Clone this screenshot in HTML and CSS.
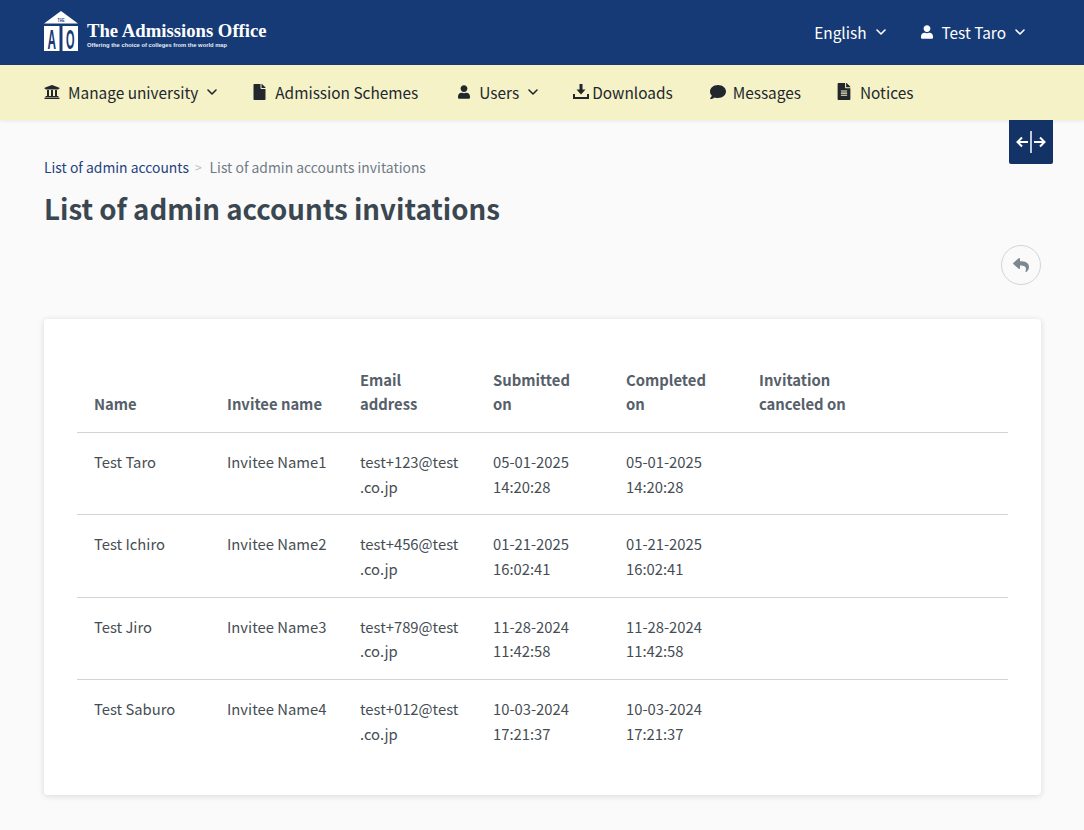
FILE: index.html
```html
<!DOCTYPE html>
<html lang="en">
<head>
<meta charset="utf-8">
<title>List of admin accounts invitations</title>
<link rel="stylesheet" href="styles.css">
</head>
<body>
<svg class="defs" width="0" height="0" aria-hidden="true">
  <symbol id="chev" viewBox="0 0 10 6"><path d="M1 1l4 4 4-4" fill="none" stroke="currentColor" stroke-width="1.6" stroke-linecap="round" stroke-linejoin="round"/></symbol>
  <symbol id="user" viewBox="0 0 448 512"><path d="M224 256c70.700 0 128-57.300 128-128S294.700 0 224 0 96 57.300 96 128s57.300 128 128 128zm89.600 32h-16.700c-22.200 10.200-46.900 16-72.900 16s-50.600-5.800-72.900-16h-16.700C60.200 288 0 348.200 0 422.400V464c0 26.500 21.500 48 48 48h352c26.500 0 48-21.500 48-48v-41.600c0-74.200-60.200-134.400-134.400-134.400z" fill="currentColor"/></symbol>
</svg>
<header class="topbar">
  <a class="brand">
    <svg class="brand-mark" viewBox="0 0 34 40" width="34" height="40">
      <path d="M17 0 34 12.500H0z" fill="#fff"/>
      <rect x="0" y="15" width="15.500" height="25" fill="#fff"/>
      <rect x="18.500" y="15" width="15.500" height="25" fill="#fff"/>
      <text x="13.500" y="10.500" class="mark-the" textLength="7" lengthAdjust="spacingAndGlyphs">THE</text>
      <text x="3.500" y="38" class="mark-big" textLength="8.500" lengthAdjust="spacingAndGlyphs">A</text>
      <text x="22" y="38" class="mark-big" textLength="8.500" lengthAdjust="spacingAndGlyphs">O</text>
    </svg>
    <span class="brand-text">
      <span class="brand-name">The Admissions Office</span>
      <span class="brand-tag">Offering the choice of colleges from the world map</span>
    </span>
  </a>
  <div class="top-actions">
    <span class="top-item">English <svg class="chev"><use href="#chev"/></svg></span>
    <span class="top-item"><svg class="ico-user"><use href="#user"/></svg>Test Taro <svg class="chev"><use href="#chev"/></svg></span>
  </div>
</header>
<nav class="menu">
  <span class="menu-item">
    <svg class="ico-bank" viewBox="0 0 512 512"><path d="M496 128v16a8 8 0 0 1-8 8h-24v12c0 6.627-5.373 12-12 12H60c-6.627 0-12-5.373-12-12v-12H24a8 8 0 0 1-8-8v-16a8 8 0 0 1 4.941-7.391l232-88a7.996 7.996 0 0 1 6.118 0l232 88A8 8 0 0 1 496 128zm-24 304H40c-13.255 0-24 10.745-24 24v16a8 8 0 0 0 8 8h464a8 8 0 0 0 8-8v-16c0-13.255-10.745-24-24-24zM96 192v192H60c-6.627 0-12 5.373-12 12v20h416v-20c0-6.627-5.373-12-12-12h-36V192h-64v192h-64V192h-64v192h-64V192H96z" fill="currentColor"/></svg>
    Manage university <svg class="chev"><use href="#chev"/></svg>
  </span>
  <span class="menu-item">
    <svg class="ico-file" viewBox="0 0 384 512"><path d="M224 136V0H24C10.700 0 0 10.700 0 24v464c0 13.300 10.700 24 24 24h336c13.300 0 24-10.700 24-24V160H248c-13.200 0-24-10.800-24-24zm160-14.100v6.100H256V0h6.100c6.400 0 12.500 2.500 17 7l97.900 98c4.500 4.500 7 10.600 7 16.900z" fill="currentColor"/></svg>Admission Schemes
  </span>
  <span class="menu-item users"><svg class="ico-user"><use href="#user"/></svg>Users <svg class="chev"><use href="#chev"/></svg></span>
  <span class="menu-item tight">
    <svg class="ico-dl" viewBox="0 0 16 15"><path d="M6.500 0h3v5.500h3L8 10.500 3.500 5.500h3z" fill="currentColor"/><path d="M1 10v4h14v-4" fill="none" stroke="currentColor" stroke-width="2"/></svg>Downloads
  </span>
  <span class="menu-item msg">
    <svg class="ico-msg" viewBox="0 32 512 448"><path d="M256 32C114.600 32 0 125.100 0 240c0 49.600 21.400 95 57 130.700C44.500 421.100 2.700 466 2.200 466.500c-2.200 2.300-2.800 5.700-1.500 8.700S4.800 480 8 480c66.300 0 116-31.800 140.600-51.400 32.700 12.300 69 19.400 107.400 19.400 141.400 0 256-93.100 256-208S397.400 32 256 32z" fill="currentColor"/></svg>Messages
  </span>
  <span class="menu-item">
    <svg class="ico-note" viewBox="0 0 384 512"><path d="M224 136V0H24C10.700 0 0 10.700 0 24v464c0 13.300 10.700 24 24 24h336c13.300 0 24-10.700 24-24V160H248c-13.200 0-24-10.800-24-24zm64 236c0 6.600-5.400 12-12 12H108c-6.600 0-12-5.400-12-12v-8c0-6.600 5.400-12 12-12h168c6.600 0 12 5.400 12 12v8zm0-64c0 6.600-5.400 12-12 12H108c-6.600 0-12-5.400-12-12v-8c0-6.600 5.400-12 12-12h168c6.600 0 12 5.400 12 12v8zm0-72v8c0 6.600-5.400 12-12 12H108c-6.600 0-12-5.400-12-12v-8c0-6.600 5.400-12 12-12h168c6.600 0 12 5.400 12 12zm96-114.100v6.100H256V0h6.100c6.400 0 12.500 2.500 17 7l97.900 98c4.500 4.500 7 10.600 7 16.900z" fill="currentColor"/></svg>Notices
  </span>
</nav>
<main class="content">
  <button class="toggle" aria-label="Toggle width">
    <svg viewBox="0 0 30 22" width="30" height="22"><path d="M15 0v22" stroke="#fff" stroke-width="1.500" fill="none"/><path d="M12 11H1.500M6 6.500 1.500 11 6 15.500M18 11h10.500M24 6.500 28.500 11 24 15.500" stroke="#fff" stroke-width="2" fill="none"/></svg>
  </button>
  <div class="crumbs"><a class="crumb-link">List of admin accounts</a><span class="crumb-sep">&gt;</span><span class="crumb-cur">List of admin accounts invitations</span></div>
  <h1 class="title">List of admin accounts invitations</h1>
  <div class="actions">
    <button class="back" aria-label="Back">
      <svg viewBox="0 0 512 512" width="16" height="16"><path d="M8.309 189.836L184.313 37.851C199.719 24.546 224 35.347 224 56.015v80.053c160.629 1.839 288 34.032 288 186.258 0 61.441-39.581 122.309-83.333 154.132-13.653 9.931-33.111-2.533-28.077-18.631 45.344-145.012-21.507-183.51-176.59-185.742V360c0 20.7-24.3 31.453-39.687 18.164l-176.004-152c-11.071-9.562-11.086-26.753 0-36.328z" fill="#7c8890"/></svg>
    </button>
  </div>
  <section class="card">
    <table class="grid">
      <thead>
        <tr><th>Name</th><th>Invitee name</th><th>Email address</th><th>Submitted on</th><th>Completed on</th><th>Invitation canceled on</th><th></th></tr>
      </thead>
      <tbody>
        <tr><td>Test Taro</td><td>Invitee Name1</td><td>test+123@test .co.jp</td><td>05-01-2025 14:20:28</td><td>05-01-2025 14:20:28</td><td></td><td></td></tr>
        <tr><td>Test Ichiro</td><td>Invitee Name2</td><td>test+456@test .co.jp</td><td>01-21-2025 16:02:41</td><td>01-21-2025 16:02:41</td><td></td><td></td></tr>
        <tr><td>Test Jiro</td><td>Invitee Name3</td><td>test+789@test .co.jp</td><td>11-28-2024 11:42:58</td><td>11-28-2024 11:42:58</td><td></td><td></td></tr>
        <tr><td>Test Saburo</td><td>Invitee Name4</td><td>test+012@test .co.jp</td><td>10-03-2024 17:21:37</td><td>10-03-2024 17:21:37</td><td></td><td></td></tr>
      </tbody>
    </table>
  </section>
</main>
</body>
</html>
```
FILE: styles.css
```css
* { box-sizing: border-box; }
html, body { margin: 0; padding: 0; }
body {
  width: 1084px;
  height: 830px;
  overflow: hidden;
  background: #fafafa;
  font-family: "Noto Sans CJK JP", "Noto Sans", sans-serif;
  font-size: 15.4px;
  line-height: 24px;
  color: #363f46;
}
.defs { position: absolute; }
.topbar {
  height: 65px;
  background: #163a75;
  color: #fff;
  display: flex;
  align-items: center;
  justify-content: space-between;
  padding: 0 59px 2px 44px;
}
.brand { display: flex; align-items: flex-start; gap: 9px; margin-top: -1px; }
.brand-mark { display: block; overflow: visible; }
.mark-the { font: 700 4.5px "Liberation Sans", sans-serif; fill: #163a75; }
.mark-big { font: 700 27px "Liberation Sans", sans-serif; fill: #163a75; }
.brand-text { display: flex; flex-direction: column; margin-top: 10px; }
.brand-name { font: 700 18.7px/20px "Liberation Serif", serif; color: #fff; white-space: nowrap; }
.brand-tag { font: 700 5.8px/8px "Liberation Sans", sans-serif; color: #e6ebf3; white-space: nowrap; }
.top-actions { display: flex; gap: 35px; }
.top-item { display: flex; align-items: center; gap: 9px; }
.chev { width: 10px; height: 6px; flex: none; }
.ico-user { width: 12px; height: 14px; flex: none; }
.menu {
  height: 55px;
  background: #f5f2c7;
  color: #22272e;
  display: flex;
  align-items: center;
  gap: 36px;
  padding: 0 44px 2px;
  box-shadow: 0 1px 4px rgba(0, 0, 0, 0.08);
  position: relative;
}
.menu-item { display: flex; align-items: center; gap: 9px; }
.menu-item.users { margin-left: 4px; margin-right: -1px; }
.menu-item.tight { gap: 3px; margin-right: 1px; }
.menu-item.msg { gap: 7px; }
.ico-bank { width: 16px; height: 16px; flex: none; margin-right: -1px; }
.ico-file { width: 13px; height: 16px; flex: none; }
.ico-note { width: 14px; height: 17px; flex: none; }
.ico-dl { width: 16px; height: 15px; flex: none; }
.ico-msg { width: 16px; height: 14px; flex: none; }
.content { position: relative; padding: 36px 43px 0 44px; }
.toggle {
  position: absolute;
  top: 0;
  right: 31px;
  width: 44px;
  height: 44px;
  padding: 0;
  border: 0;
  border-radius: 0 0 2px 2px;
  background: #133367;
  display: flex;
  align-items: center;
  justify-content: center;
}
.crumbs { font-size: 13.9px; line-height: 22px; height: 22px; display: flex; }
.crumb-link { color: #1e4280; }
.crumb-sep { color: #b9bec4; margin: 0 8px 0 6px; font-size: 12px; }
.crumb-cur { color: #717b86; }
.title { margin: 9px 0 0; font-size: 27.65px; line-height: 42px; font-weight: 600; color: #3a4750; }
.actions { display: flex; justify-content: flex-end; margin-top: 16px; }
.back {
  width: 40px;
  height: 40px;
  padding: 0;
  border: 1px solid #cfd5da;
  border-radius: 50%;
  background: transparent;
  display: flex;
  align-items: center;
  justify-content: center;
}
.card {
  margin-top: 34px;
  height: 476px;
  background: #fff;
  border-radius: 4px;
  box-shadow: 0 1px 6px rgba(0, 0, 0, 0.14);
  padding: 49px 33px 0;
}
.grid { width: 931px; border-collapse: collapse; table-layout: fixed; font-size: 14.8px; }
.grid th, .grid td { padding: 0 17px; text-align: left; vertical-align: top; }
.grid th { vertical-align: bottom; padding-bottom: 16px; font-weight: 600; color: #56606a; border-bottom: 1px solid #cfd4d8; }
.grid td { height: 82.4px; padding: 17px 14px 0 17px; line-height: 24.5px; font-weight: 400; color: #454d54; border-bottom: 1px solid #cfd4d8; }
.grid tbody tr:last-child td { border-bottom: 0; }
```
